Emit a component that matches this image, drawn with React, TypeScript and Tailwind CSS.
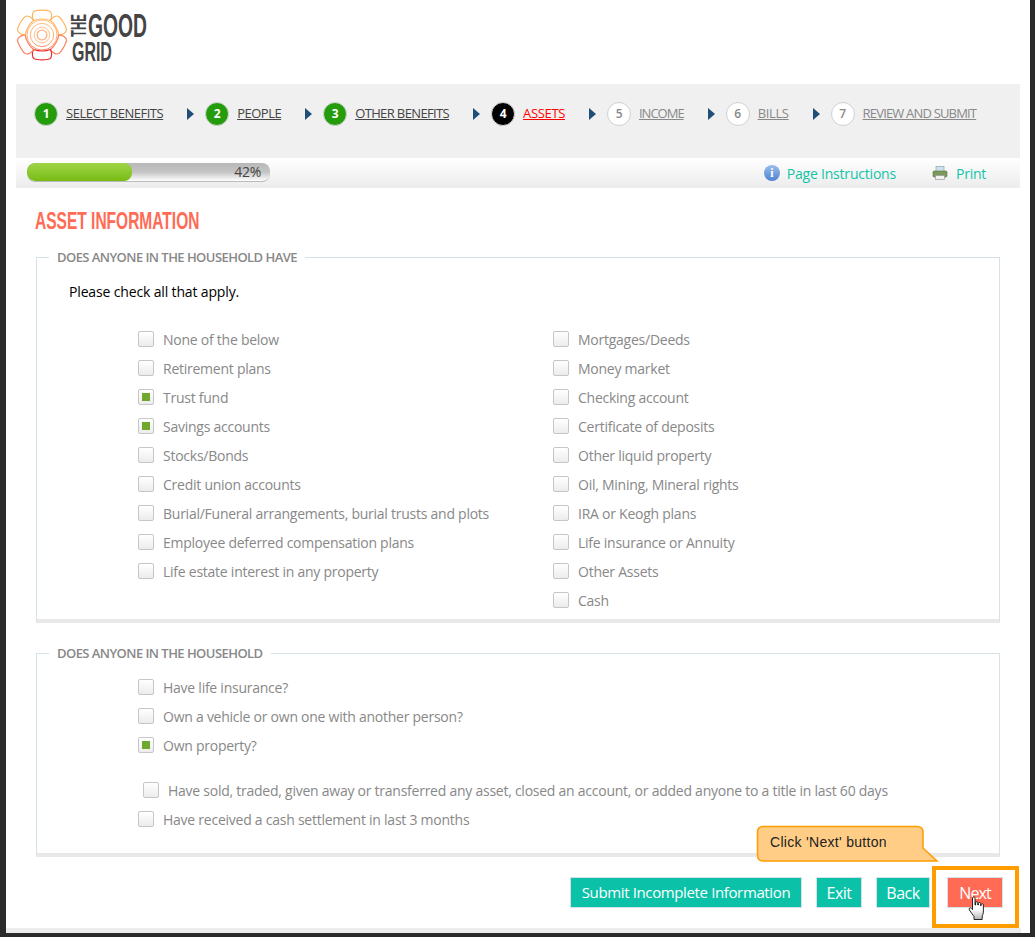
const steps = [
  { n: 1, label: "Select Benefits", state: "done", track: "tracking-[-0.48px]" },
  { n: 2, label: "People", state: "done", track: "tracking-[-0.5px]" },
  { n: 3, label: "Other Benefits", state: "done", track: "tracking-[-0.63px]" },
  { n: 4, label: "Assets", state: "current", track: "tracking-[-0.35px]" },
  { n: 5, label: "Income", state: "todo", track: "tracking-[-1px]" },
  { n: 6, label: "Bills", state: "todo", track: "tracking-[-0.35px]" },
  { n: 7, label: "Review and Submit", state: "todo", track: "tracking-[-0.82px]" },
]

const leftAssets = [
  { label: "None of the below" },
  { label: "Retirement plans" },
  { label: "Trust fund", checked: true },
  { label: "Savings accounts", checked: true },
  { label: "Stocks/Bonds" },
  { label: "Credit union accounts" },
  { label: "Burial/Funeral arrangements, burial trusts and plots" },
  { label: "Employee deferred compensation plans" },
  { label: "Life estate interest in any property" },
]

const rightAssets = [
  "Mortgages/Deeds",
  "Money market",
  "Checking account",
  "Certificate of deposits",
  "Other liquid property",
  "Oil, Mining, Mineral rights",
  "IRA or Keogh plans",
  "Life insurance or Annuity",
  "Other Assets",
  "Cash",
]

function Logo() {
  const petals = [0, 60, 120, 180, 240, 300]
  return (
    <div className="relative h-[64px] w-[150px]">
      <svg width="66" height="64" viewBox="0 0 66 64" className="absolute -left-[6px] top-0" fill="none">
        <defs>
          <linearGradient id="logoGrad" gradientUnits="userSpaceOnUse" x1="0" y1="2" x2="0" y2="54">
            <stop offset="0" stopColor="#ffc163" />
            <stop offset="0.6" stopColor="#ff9e62" />
            <stop offset="1" stopColor="#ee2a30" />
          </linearGradient>
        </defs>
        <g transform="translate(32 27) scale(0.97) translate(-32 -27)">
          {petals.map((a) => (
            <g key={a} transform={`rotate(${a} 32 27)`}>
              <path
                d="M24 2.5 C27 1 37 1 40 2.5 C42.5 4 42.5 9 40.5 12 C36 10 28 10 23.5 12 C21.5 9 21.5 4 24 2.5 Z"
                stroke={a === 180 ? "#ee2a30" : a === 120 || a === 240 ? "#ff7a5a" : "#ffb45c"}
                strokeWidth="1.2"
              />
            </g>
          ))}
          <circle cx="32" cy="27" r="15.5" stroke="url(#logoGrad)" strokeWidth="0.9" />
          <circle cx="32" cy="27" r="12" stroke="url(#logoGrad)" strokeWidth="0.9" />
          <circle cx="32" cy="27" r="8" stroke="#ffc08a" strokeWidth="1" />
          <circle cx="32" cy="27" r="5" stroke="#ffb488" strokeWidth="1.4" />
        </g>
      </svg>
      <span className="absolute left-[54px] top-[29px] origin-top-left -rotate-90 scale-x-[0.52] font-['Liberation_Sans',sans-serif] text-[22px] font-bold leading-[18px] tracking-normal text-[#444]">
        THE
      </span>
      <span className="absolute left-[72px] top-[4px] origin-top-left scale-x-[0.585] font-['Liberation_Sans',sans-serif] text-[33px] font-bold leading-[27px] tracking-normal text-[#444]">
        GOOD
      </span>
      <span className="absolute left-[56px] top-[34px] origin-top-left scale-x-[0.57] font-['Liberation_Sans',sans-serif] text-[28px] font-bold leading-[20px] tracking-normal text-[#444]">
        GRID
      </span>
    </div>
  )
}

function StepBar() {
  return (
    <div className="flex h-[74px] items-center bg-[#f0f0f0] pb-[14px] pl-[18px]">
      {steps.map((s, i) => (
        <div key={s.n} className="flex items-center">
          {i > 0 && (
            <span className="ml-[24px] mr-[11px] h-0 w-0 border-y-[6px] border-l-[7px] border-y-transparent border-l-[#1f4e79]" />
          )}
          <span
            className={
              s.state === "done"
                ? "flex h-[24px] w-[24px] items-center justify-center rounded-full border border-[#d5d5d5] bg-[#259c0c] text-[12px] font-bold text-white"
                : s.state === "current"
                  ? "flex h-[24px] w-[24px] items-center justify-center rounded-full border border-[#d5d5d5] bg-black text-[12px] font-bold text-white"
                  : "flex h-[24px] w-[24px] items-center justify-center rounded-full border border-[#d0d0d0] bg-white text-[12px] font-semibold text-[#888]"
            }
          >
            {s.n}
          </span>
          <a
            className={
              s.state === "done"
                ? `ml-[8px] text-[13px] font-medium uppercase text-[#444] underline ${s.track}`
                : s.state === "current"
                  ? `ml-[8px] text-[13px] font-medium uppercase text-[#f00] underline ${s.track}`
                  : `ml-[8px] text-[13px] font-medium uppercase text-[#888] underline ${s.track}`
            }
          >
            {s.label}
          </a>
        </div>
      ))}
    </div>
  )
}

function ProgressRow() {
  return (
    <div className="flex h-[30px] items-center justify-between bg-gradient-to-b from-white to-[#ececec] pl-[11px] pr-[34px]">
      <div className="relative mb-[1px] h-[19px] w-[243px] overflow-hidden rounded-[8px] border-b border-[#bbb] bg-gradient-to-b from-[#b8b8b8] via-[#c4c4c4] to-white">
        <div className="h-full w-[105px] rounded-[8px] bg-gradient-to-b from-[#9fd544] to-[#78bb10]" />
        <span className="absolute right-[9px] top-0 text-[14px] leading-[18px] text-[#444]">42%</span>
      </div>
      <div className="flex items-center text-[14px] text-[#12c4a6]">
        <span className="mr-[7px] flex h-[16px] w-[16px] items-center justify-center rounded-full bg-gradient-to-b from-[#9dbdea] to-[#4d82d2] font-['Liberation_Serif',serif] text-[12px] font-bold text-white">
          i
        </span>
        <span className="tracking-[-0.2px]">Page Instructions</span>
        <svg width="16" height="16" viewBox="0 0 16 16" className="ml-[36px] mr-[8px]">
          <rect x="4" y="1.5" width="8" height="5" fill="#cfe0ee" stroke="#8aa" strokeWidth="0.7" />
          <rect x="1" y="6" width="14" height="6" rx="1" fill="#7a9a5a" stroke="#5c7a44" strokeWidth="0.6" />
          <rect x="3.5" y="10.5" width="9" height="4" fill="#f2f2f2" stroke="#999" strokeWidth="0.7" />
        </svg>
        <span>Print</span>
      </div>
    </div>
  )
}

function Check({ label, checked, className }: { label: string; checked?: boolean; className?: string }) {
  return (
    <label className={`flex h-[29px] items-center text-[#888] ${className ?? ""}`}>
      <span className="mr-[9px] flex h-[16px] w-[16px] shrink-0 items-center justify-center rounded-[2px] border border-[#c6c6c6] bg-gradient-to-b from-white to-[#ececec]">
        {checked && <span className="h-[8px] w-[8px] bg-[#6fa82a]" />}
      </span>
      {label}
    </label>
  )
}

function Cursor() {
  return (
    <svg width="18" height="25" viewBox="0 0 18 25" className="absolute left-[968px] top-[896px]">
      <defs>
        <linearGradient id="handFill" x1="0" y1="0" x2="0" y2="1">
          <stop offset="0.55" stopColor="#fff" />
          <stop offset="1" stopColor="#b5b5b5" />
        </linearGradient>
      </defs>
      <path
        d="M4.5 2 C4.5 0.6 7 0.6 7 2 L7 9 L7.6 9 L7.6 6.6 C7.6 5.4 9.8 5.4 9.8 6.6 L9.8 9 L10.4 9 L10.4 7.4 C10.4 6.2 12.6 6.2 12.6 7.4 L12.6 9.6 L13.2 9.6 L13.2 8.6 C13.2 7.5 15.4 7.5 15.4 8.6 L15.4 15 C15.4 18 14.6 19 14.2 20 L14.2 23.5 L6 23.5 L6 20.5 C4.5 18.5 3 16.5 1.4 14 C0.4 12.4 2.2 11 3.4 12.2 L4.5 13.6 Z"
        fill="url(#handFill)"
        stroke="#111"
        strokeWidth="0.9"
      />
    </svg>
  )
}

export default function App() {
  return (
    <div className="relative h-[937px] w-[1035px] overflow-hidden bg-[#2b2b2b] font-['Open_Sans',sans-serif] text-[14px] tracking-[-0.25px]">
      <div className="ml-[6px] h-[933px] w-[1024px] bg-white pl-[10px] pr-[10px]">
        <div className="h-[84px] pt-[8px]">
          <Logo />
        </div>
        <StepBar />
        <ProgressRow />

        <div className="px-[20px]">
          <h1 className="mt-[20px] -ml-[1px] origin-left scale-x-[0.675] font-['Liberation_Sans',sans-serif] text-[23px] font-bold leading-[26px] tracking-normal text-[#ff6b55]">
            ASSET INFORMATION
          </h1>

          <fieldset className="mt-[14px] h-[375px] border border-b-4 border-[#d5e2e8] border-b-[#e8e8e8] pl-[32px]">
            <legend className="-ml-[20px] px-[8px] text-[13px] font-semibold uppercase tracking-[-0.55px] text-[#888]">
              Does anyone in the household have
            </legend>
            <p className="mt-[13px] font-medium tracking-[-0.15px] text-black">Please check all that apply.</p>
            <div className="mt-[23px] flex pl-[69px]">
              <div className="w-[415px]">
                {leftAssets.map((a) => (
                  <Check key={a.label} label={a.label} checked={a.checked} />
                ))}
              </div>
              <div>
                {rightAssets.map((a) => (
                  <Check key={a} label={a} />
                ))}
              </div>
            </div>
          </fieldset>

          <fieldset className="mt-[21px] h-[213px] border border-b-4 border-[#d5e2e8] border-b-[#e8e8e8] pl-[101px]">
            <legend className="-ml-[89px] px-[8px] text-[13px] font-semibold uppercase tracking-[-0.55px] text-[#888]">
              Does anyone in the household
            </legend>
            <div className="mt-[9px]">
              <Check label="Have life insurance?" />
              <Check label="Own a vehicle or own one with another person?" />
              <Check label="Own property?" checked />
              <Check
                className="mt-[16px] pl-[5px]"
                label="Have sold, traded, given away or transferred any asset, closed an account, or added anyone to a title in last 60 days"
              />
              <Check label="Have received a cash settlement in last 3 months" />
            </div>
          </fieldset>

          <div className="mt-[20px] flex whitespace-nowrap text-[16px] tracking-[-0.5px] text-white">
            <button className="ml-[534px] h-[31px] w-[232px] shrink-0 border border-[#d5e2e8] bg-[#0bc2a8] text-[15px] tracking-[-0.37px]">
              Submit Incomplete Information
            </button>
            <button className="ml-[14px] h-[31px] w-[46px] shrink-0 border border-[#d5e2e8] bg-[#0bc2a8]">Exit</button>
            <button className="ml-[14px] h-[31px] w-[54px] shrink-0 border border-[#d5e2e8] bg-[#0bc2a8]">Back</button>
            <button className="ml-[17px] h-[31px] w-[56px] shrink-0 border border-[#d5e2e8] bg-[#ff6b55] tracking-[-0.9px]">Next</button>
          </div>
        </div>
      </div>

      <div className="absolute left-[6px] top-[928px] h-[5px] w-[1015px] bg-[#ececec]" />
      <div className="absolute left-[932px] top-[866px] h-[62px] w-[87px] border-[4px] border-[#ff9c00]" />

      <svg width="190" height="42" viewBox="0 0 190 42" className="absolute left-[756px] top-[825px]">
        <path
          d="M7 1.5 H161 Q167 1.5 167 7.5 V23 L181 36 L161 36 H7 Q1.5 36 1.5 30 V7.5 Q1.5 1.5 7 1.5 Z"
          fill="#ffcd86"
          stroke="#ff9c00"
          strokeWidth="1.5"
        />
      </svg>
      <span className="absolute left-[770px] top-[832px] font-['Liberation_Sans',sans-serif] text-[14px] leading-[20px] tracking-[0.3px] text-[#222]">
        Click &apos;Next&apos; button
      </span>
      <Cursor />
    </div>
  )
}
